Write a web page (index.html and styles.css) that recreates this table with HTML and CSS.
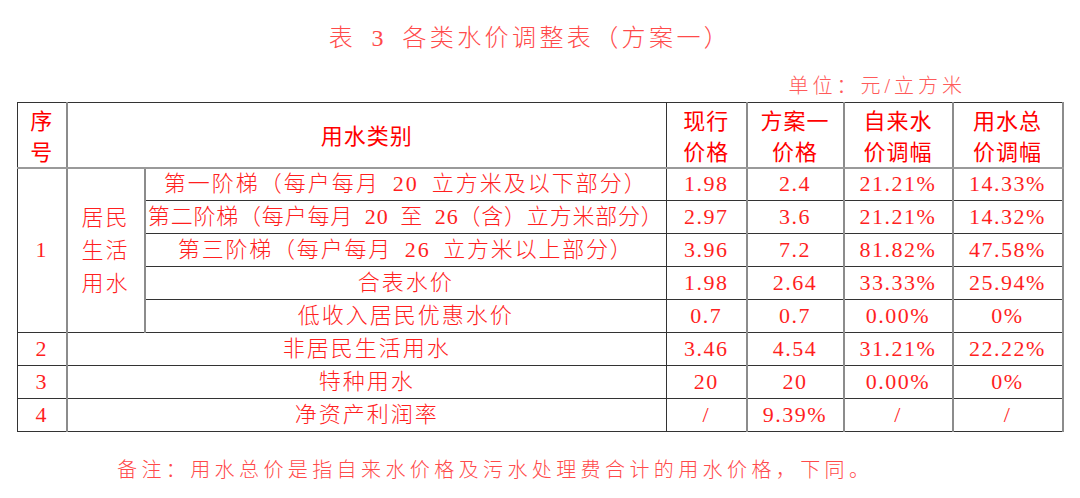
FILE: index.html
```html
<!DOCTYPE html>
<html lang="zh-CN">
<head>
<meta charset="utf-8">
<title>表3 各类水价调整表（方案一）</title>
<link rel="stylesheet" href="styles.css">
</head>
<body>
<div class="page">
  <h1 class="title">表&ensp;3&ensp;各类水价调整表（方案一）</h1>
  <div class="unit">单位：元/立方米</div>
  <table class="prices">
    <colgroup>
      <col class="c-no">
      <col class="c-group">
      <col class="c-name">
      <col class="c-cur">
      <col class="c-plan">
      <col class="c-tap">
      <col class="c-total">
    </colgroup>
    <thead>
      <tr class="head">
        <th class="b-dark">序<br>号</th>
        <th colspan="2" class="b-gray">用水类别</th>
        <th class="b-dark">现行<br>价格</th>
        <th class="b-gray">方案一<br>价格</th>
        <th class="b-gray">自来水<br>价调幅</th>
        <th class="b-gray">用水总<br>价调幅</th>
      </tr>
    </thead>
    <tbody>
      <tr>
        <td rowspan="5" class="num b-dark">1</td>
        <td rowspan="5" class="group b-gray">居民<br>生活<br>用水</td>
        <td class="label b-gray tier1">第一阶梯（每户每月&ensp;20&ensp;立方米及以下部分）</td>
        <td class="num b-dark">1.98</td>
        <td class="num b-gray">2.4</td>
        <td class="num b-gray">21.21%</td>
        <td class="num b-gray">14.33%</td>
      </tr>
      <tr>
        <td class="label b-gray tier2">第二阶梯（每户每月&ensp;20&ensp;至&ensp;26（含）立方米部分）</td>
        <td class="num b-dark">2.97</td>
        <td class="num b-gray">3.6</td>
        <td class="num b-gray">21.21%</td>
        <td class="num b-gray">14.32%</td>
      </tr>
      <tr>
        <td class="label b-gray tier3">第三阶梯（每户每月&ensp;26&ensp;立方米以上部分）</td>
        <td class="num b-dark">3.96</td>
        <td class="num b-gray">7.2</td>
        <td class="num b-gray">81.82%</td>
        <td class="num b-gray">47.58%</td>
      </tr>
      <tr>
        <td class="label b-gray">合表水价</td>
        <td class="num b-dark">1.98</td>
        <td class="num b-gray">2.64</td>
        <td class="num b-gray">33.33%</td>
        <td class="num b-gray">25.94%</td>
      </tr>
      <tr>
        <td class="label b-gray">低收入居民优惠水价</td>
        <td class="num b-dark">0.7</td>
        <td class="num b-gray">0.7</td>
        <td class="num b-gray">0.00%</td>
        <td class="num b-gray">0%</td>
      </tr>
      <tr>
        <td class="num b-dark">2</td>
        <td colspan="2" class="label b-gray">非居民生活用水</td>
        <td class="num b-dark">3.46</td>
        <td class="num b-gray">4.54</td>
        <td class="num b-gray">31.21%</td>
        <td class="num b-gray">22.22%</td>
      </tr>
      <tr>
        <td class="num b-dark">3</td>
        <td colspan="2" class="label b-gray">特种用水</td>
        <td class="num b-dark">20</td>
        <td class="num b-gray">20</td>
        <td class="num b-gray">0.00%</td>
        <td class="num b-gray">0%</td>
      </tr>
      <tr>
        <td class="num b-dark">4</td>
        <td colspan="2" class="label b-gray">净资产利润率</td>
        <td class="num b-dark">/</td>
        <td class="num b-gray">9.39%</td>
        <td class="num b-gray">/</td>
        <td class="num b-gray">/</td>
      </tr>
    </tbody>
  </table>
  <p class="note">备注：用水总价是指自来水价格及污水处理费合计的用水价格，下同。</p>
</div>
</body>
</html>
```
FILE: styles.css
```css
html, body {
  margin: 0;
  padding: 0;
  background: #ffffff;
}

.page {
  width: 1080px;
  height: 498px;
  box-sizing: border-box;
  padding-top: 23px;
  display: flex;
  flex-direction: column;
  font-family: "Liberation Serif", "Noto Sans CJK SC", serif;
  color: #ff1f1f;
}

.title {
  margin: 0;
  height: 30px;
  line-height: 30px;
  font-size: 24px;
  font-weight: 300;
  letter-spacing: 3.4px;
  text-align: center;
  padding-right: 20px;
  color: #ff4a4a;
}

.unit {
  margin-top: 21px;
  height: 24px;
  line-height: 24px;
  font-size: 20px;
  font-weight: 300;
  letter-spacing: 4px;
  text-align: right;
  padding-right: 114px;
  color: #ff5a5a;
}

.prices {
  margin-top: 4px;
  margin-left: 17px;
  width: 1045px;
  table-layout: fixed;
  border-collapse: collapse;
  border: 1px solid #333333;
  border-right: 2px solid #8c8c8c;
}

.c-no { width: 49px; }
.c-group { width: 78px; }
.c-name { width: 522px; }
.c-cur { width: 80px; }
.c-plan { width: 97px; }
.c-tap { width: 109px; }
.c-total { width: 110px; }

.prices th,
.prices td {
  padding: 0;
  text-align: center;
  vertical-align: middle;
  border-top: 1px solid #333333;
  border-bottom: 1px solid #333333;
}

.prices .b-dark { border-left: 1px solid #333333; }
.prices .b-gray { border-left: 2px solid #8c8c8c; }

.prices thead th {
  font-family: "Noto Sans CJK SC", sans-serif;
  font-weight: 400;
  font-size: 22px;
  line-height: 31px;
  color: #ff0000;
  letter-spacing: 1px;
  border-bottom: 2px solid #9a9a9a;
}

.prices .head { height: 65px; }
.prices tbody tr { height: 33px; }

.prices td {
  font-size: 22px;
  font-weight: 300;
  line-height: 26px;
}

.prices .num {
  letter-spacing: 1.5px;
}

.prices .label {
  letter-spacing: 2px;
}

.prices .label.tier1 { letter-spacing: 2px; }
.prices .label.tier2 { letter-spacing: 0.8px; }
.prices .label.tier3 { letter-spacing: 1.8px; }

.prices .group {
  line-height: 33px;
  letter-spacing: 2px;
}

.note {
  margin: 26px 0 0 0;
  padding-left: 117px;
  height: 24px;
  line-height: 24px;
  font-size: 20px;
  font-weight: 300;
  letter-spacing: 4.4px;
  color: #ff4a4a;
}
```
